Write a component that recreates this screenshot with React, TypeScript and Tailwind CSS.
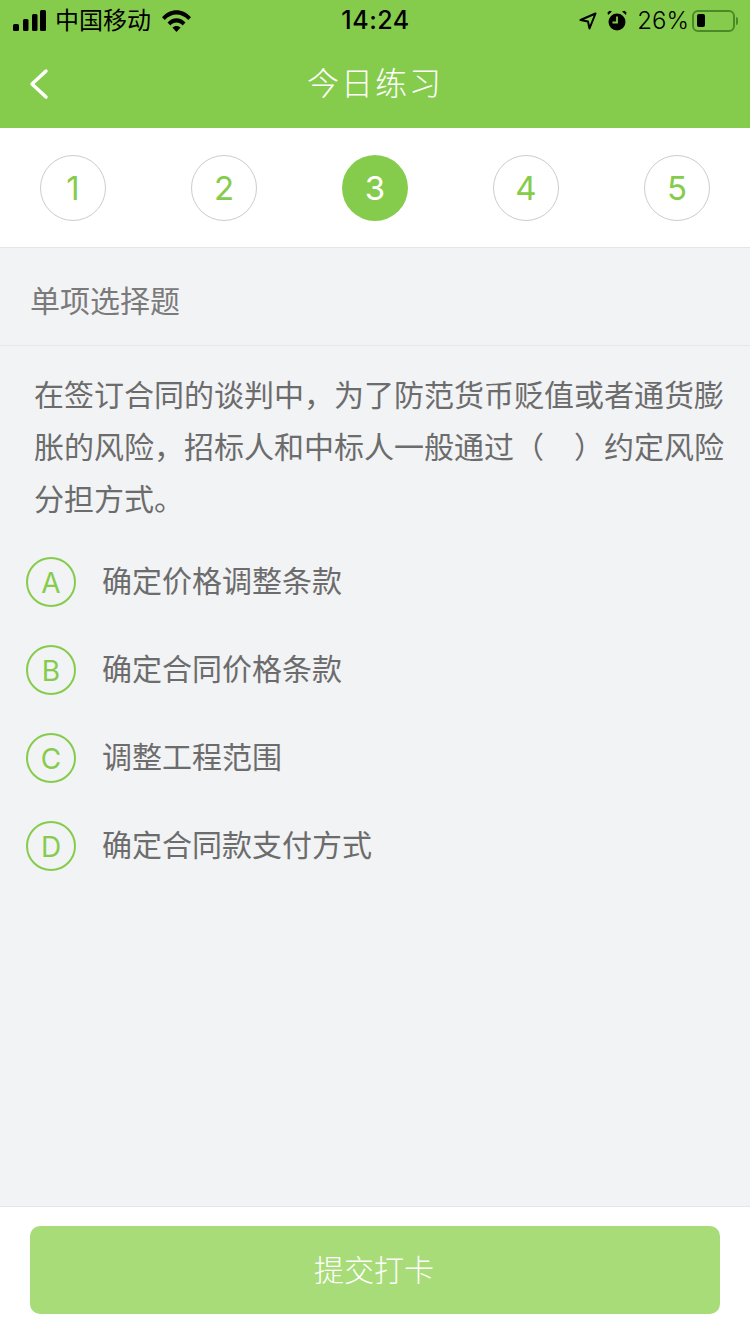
const steps = [1, 2, 3, 4, 5]

const options = [
  { key: "A", text: "确定价格调整条款" },
  { key: "B", text: "确定合同价格条款" },
  { key: "C", text: "调整工程范围" },
  { key: "D", text: "确定合同款支付方式" },
]

function StatusBar() {
  return (
    <div className="flex h-10 items-center justify-between pl-[13px] pr-[12px] pt-[1px] text-black">
      <div className="flex w-[178px] items-center">
        <svg width="33" height="21" viewBox="0 0 33 21" fill="currentColor">
          <rect x="0" y="14" width="6" height="7" rx="1.5" />
          <rect x="10" y="9" width="5.5" height="12" rx="1.5" />
          <rect x="19" y="4" width="5.5" height="17" rx="1.5" />
          <rect x="27" y="0" width="6" height="21" rx="1.5" />
        </svg>
        <span className="ml-[9px] text-[24px] leading-none">中国移动</span>
        <svg className="ml-[11px]" width="29" height="22" viewBox="0 0 29 22" fill="currentColor">
          <path d="M0 7.2 C8 -2.2 21 -2.2 29 7.2 L26.2 10 C19.5 2.6 9.5 2.6 2.8 10 Z" />
          <path d="M5.5 12.6 C10.5 6.8 18.5 6.8 23.5 12.6 L20.6 15.4 C17 11.6 12 11.6 8.4 15.4 Z" />
          <path d="M14.5 22 L10.4 17.6 C12.6 15.4 16.4 15.4 18.6 17.6 Z" />
        </svg>
      </div>
      <span className="font-['Inter'] text-[25px] font-medium leading-none tracking-[0.5px]">14:24</span>
      <div className="flex w-[178px] items-center justify-end">
        <svg width="18" height="18" viewBox="0 0 18 18" fill="none" stroke="currentColor" strokeWidth="2" strokeLinejoin="round">
          <path d="M16.5 1.5 L1.5 8 L9 9.5 L10.5 16.5 Z" />
        </svg>
        <svg className="ml-[10px]" width="20" height="22" viewBox="0 0 20 22" fill="currentColor">
          <circle cx="10" cy="12" r="8.5" />
          <path d="M1 5 L5 1.5 L2.5 0.8 L0.5 2.6 Z M19 5 L15 1.5 L17.5 0.8 L19.5 2.6 Z" />
          <path d="M10 6.5 V12.5 H5.5" fill="none" stroke="#86cc4c" strokeWidth="1.8" />
        </svg>
        <span className="ml-[10px] font-['Inter'] text-[24px] font-light leading-none">26%</span>
        <div className="ml-[3px] flex h-[22px] w-[43px] items-center rounded-[6px] border-2 border-[#4d8a27] p-[3px]">
          <div className="h-[13px] w-[8px] rounded-[2px] bg-black" />
        </div>
        <div className="ml-[1px] h-[8px] w-[2px] rounded-r-sm bg-[#4d8a27]" />
      </div>
    </div>
  )
}

export default function App() {
  return (
    <div
      className="flex h-[1334px] w-[750px] flex-col overflow-hidden bg-[#f2f3f5]"
      style={{ fontFamily: '"Liberation Sans", "Noto Sans CJK SC", sans-serif' }}
    >
      <header className="h-32 bg-[#86cc4c]">
        <StatusBar />
        <div className="relative flex h-[88px] items-center justify-center">
          <svg className="absolute left-[28px] top-[28px]" width="22" height="32" viewBox="0 0 22 32" fill="none" stroke="white" strokeWidth="3.5" strokeLinecap="round" strokeLinejoin="round">
            <path d="M18 3 L4 16 L18 29" />
          </svg>
          <h1 className="text-[32px] font-light leading-none tracking-[2px] text-white">今日练习</h1>
        </div>
      </header>

      <div className="flex h-[120px] items-center justify-between border-b border-[#e6e6e6] bg-white px-10 pt-[1px]">
        {steps.map((n) =>
          n === 3 ? (
            <div key={n} className="flex h-[66px] w-[66px] items-center justify-center rounded-full bg-[#86cc4c] pt-[1px] font-['Inter'] text-[33px] font-normal text-white">
              {n}
            </div>
          ) : (
            <div key={n} className="flex h-[66px] w-[66px] items-center justify-center rounded-full border border-[#cccccc] pt-[1px] font-['Inter'] text-[33px] font-normal text-[#86cc4c]">
              {n}
            </div>
          )
        )}
      </div>

      <div className="flex h-[98px] items-center border-b border-[#e6e7e9] pl-[30px] pt-[10px] text-[30px] leading-none text-[#7a7a7a]">
        单项选择题
      </div>

      <p className="pl-[34px] pr-[26px] pt-[24px] text-[30px] leading-[52px] text-[#6c6c6c]">
        在签订合同的谈判中，为了防范货币贬值或者通货膨胀的风险，招标人和中标人一般通过（　）约定风险分担方式。
      </p>

      <ul className="flex-1 pl-[26px] pt-[12px]">
        {options.map((o) => (
          <li key={o.key} className="flex h-[88px] items-center">
            <div className="flex h-[50px] w-[50px] items-center justify-center rounded-full border-2 border-[#86cc4c] pt-[2px] font-['Inter'] text-[28px] font-normal text-[#86cc4c]">
              {o.key}
            </div>
            <span className="ml-[26px] text-[30px] leading-none text-[#6c6c6c]">{o.text}</span>
          </li>
        ))}
      </ul>

      <footer className="h-[128px] border-t border-[#e6e6e6] bg-white px-[30px] pt-[19px]">
        <button className="flex h-[88px] w-full items-center justify-center rounded-[10px] bg-[#a8dc78] pr-[2px] text-[30px] font-light text-white">
          提交打卡
        </button>
      </footer>
    </div>
  )
}
